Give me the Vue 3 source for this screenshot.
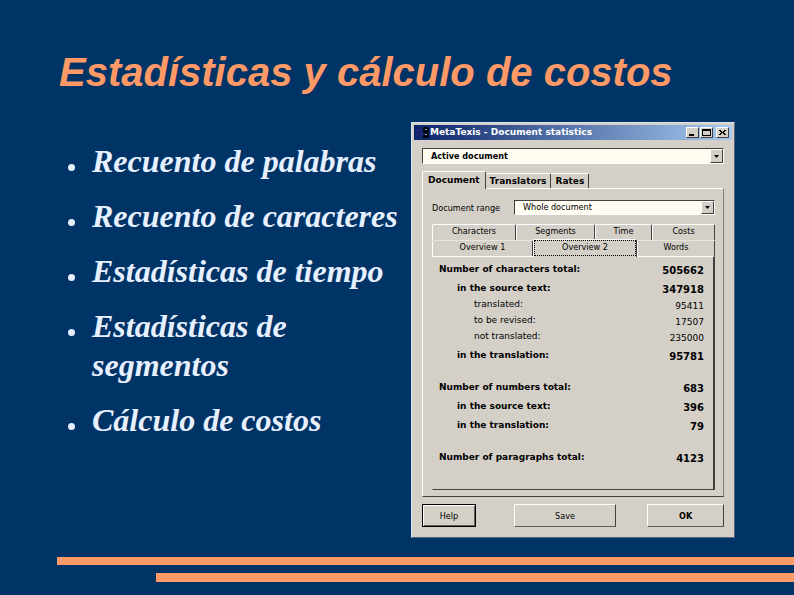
<script setup>
import { ref } from 'vue'

const topics = [
  'Recuento de palabras',
  'Recuento de caracteres',
  'Estadísticas de tiempo',
  'Estadísticas de segmentos',
  'Cálculo de costos',
]

const scope = ref('Active document')
const range = ref('Whole document')
const mainTabs = ['Document', 'Translators', 'Rates']
const backTabs = ['Characters', 'Segments', 'Time', 'Costs']
const frontTabs = ['Overview 1', 'Overview 2', 'Words']
const mainTab = ref('Document')
const subTab = ref('Overview 2')

const groups = [
  [
    { label: 'Number of characters total:', value: 505662, level: 0 },
    { label: 'in the source text:', value: 347918, level: 1 },
    { label: 'translated:', value: 95411, level: 2 },
    { label: 'to be revised:', value: 17507, level: 2 },
    { label: 'not translated:', value: 235000, level: 2 },
    { label: 'in the translation:', value: 95781, level: 1 },
  ],
  [
    { label: 'Number of numbers total:', value: 683, level: 0 },
    { label: 'in the source text:', value: 396, level: 1 },
    { label: 'in the translation:', value: 79, level: 1 },
  ],
  [{ label: 'Number of paragraphs total:', value: 4123, level: 0 }],
]
</script>

<template>
  <div class="slide">
    <h1>Estadísticas y cálculo de costos</h1>
    <main>
      <ul class="topics">
        <li v-for="t in topics" :key="t"><span>{{ t }}</span></li>
      </ul>

      <section class="dialog" aria-labelledby="dialog-title">
        <header class="titlebar">
          <svg class="logo" viewBox="0 0 15 13" aria-hidden="true">
            <path d="M1 3h2v2H1zM4 3h2v2H4zM1 7h2v2H1zM4 7h2v2H4z" fill="#2a1c78" />
            <path d="M8 1h5l1 2v3l-1 1 1 1v4H8V9h2V7H8z" fill="#05060f" />
            <path d="M10 3h2v1h-2zM10 8h2v1h-2z" fill="#8f9cc4" />
          </svg>
          <h2 id="dialog-title">MetaTexis - Document statistics</h2>
          <div class="winbuttons">
            <button type="button" aria-label="Minimize">
              <svg viewBox="0 0 11 9"><path d="M2 6h5v2H2z" /></svg>
            </button>
            <button type="button" aria-label="Maximize">
              <svg viewBox="0 0 11 9"><path d="M1 1h9v7H1zM2 3v4h7V3z" fill-rule="evenodd" /></svg>
            </button>
            <button type="button" class="close" aria-label="Close">
              <svg viewBox="0 0 11 9"><path d="M2 2h2v1h1v1h1V3h1V2h2v1H8v1H7v1h1v1h1v1H7V6H6V5H5v1H4v1H2V6h1V5h1V4H3V3H2z" /></svg>
            </button>
          </div>
        </header>

        <div class="body">
          <div class="combo scope">
            <select v-model="scope" aria-label="Scope">
              <option>Active document</option>
            </select>
            <span class="arrow"><svg viewBox="0 0 5 3"><path d="M0 0h5L2.500 3z" /></svg></span>
          </div>

          <div class="tabs main-tabs" role="tablist">
            <button
              v-for="t in mainTabs" :key="t" type="button" role="tab"
              :aria-selected="mainTab === t" :class="{ on: mainTab === t }" @click="mainTab = t"
            >{{ t }}</button>
          </div>

          <div class="panel">
            <div class="range">
              <label for="range">Document range</label>
              <div class="combo">
                <select id="range" v-model="range">
                  <option>Whole document</option>
                </select>
                <span class="arrow"><svg viewBox="0 0 5 3"><path d="M0 0h5L2.500 3z" /></svg></span>
              </div>
            </div>

            <div role="tablist">
              <div class="tabs back">
                <button
                  v-for="t in backTabs" :key="t" type="button" role="tab"
                  :aria-selected="subTab === t" :class="{ on: subTab === t }" @click="subTab = t"
                >{{ t }}</button>
              </div>
              <div class="tabs front">
                <button
                  v-for="t in frontTabs" :key="t" type="button" role="tab"
                  :aria-selected="subTab === t" :class="{ on: subTab === t }" @click="subTab = t"
                >{{ t }}</button>
              </div>
            </div>

            <div class="sheet">
              <table>
                <tbody v-for="(g, i) in groups" :key="i">
                  <tr v-for="r in g" :key="r.label" :class="'level' + r.level">
                    <th scope="row">{{ r.label }}</th>
                    <td>{{ r.value }}</td>
                  </tr>
                </tbody>
              </table>
            </div>
          </div>

          <div class="actions">
            <button type="button" class="help">Help</button>
            <button type="button" class="save">Save</button>
            <button type="button" class="ok">OK</button>
          </div>
        </div>
      </section>
    </main>
    <footer><i></i><i></i></footer>
  </div>
</template>

<style>
body {
  background: #003366;
}
</style>

<style scoped>
* {
  box-sizing: border-box;
}
.slide {
  min-height: 100vh;
  display: flex;
  flex-direction: column;
  padding: 49px 0 13px;
  background: #003366;
}
h1 {
  margin: 0 59px 27px;
  color: #ff9966;
  font: italic bold 40px/46px "Liberation Sans", sans-serif;
}
main {
  display: grid;
  grid-template-columns: minmax(0, 343fr) minmax(0, 324fr);
  align-items: start;
  padding: 0 59px 0 68px;
}
.topics {
  display: grid;
  gap: 16px;
  margin: 20px 0 0;
  padding: 0;
  list-style: none;
  color: #e6f0ff;
  font: italic bold 32px/39px "Liberation Serif", serif;
}
.topics li {
  display: grid;
  grid-template-columns: 7px 1fr;
  column-gap: 17px;
}
.topics li::before {
  content: "";
  width: 7px;
  height: 7px;
  margin-top: 22px;
  border-radius: 50%;
  background: #e6f0ff;
}

.dialog {
  padding: 2px;
  border: 1px solid;
  border-color: #d6e4f4 #56667a #56667a #d6e4f4;
  background: #d4d0c8;
  color: #000;
  font: 9px/12px "DejaVu Sans Condensed", "DejaVu Sans", sans-serif;
}
button,
select {
  margin: 0;
  padding: 0;
  border: 0;
  border-radius: 0;
  background: #d4d0c8;
  color: #000;
  font: inherit;
}
.titlebar {
  display: flex;
  align-items: center;
  height: 15px;
  padding: 0 3px 0 1px;
  background: linear-gradient(90deg, #0a246a, #a6caf0);
}
.logo {
  width: 15px;
  height: 13px;
}
.titlebar h2 {
  flex: 1;
  margin: 0;
  color: #fff;
  font-family: "DejaVu Sans", sans-serif;
  font-size: 9px;
  line-height: 13px;
  white-space: nowrap;
}
.winbuttons {
  display: flex;
  gap: 1px;
}
.winbuttons button {
  display: flex;
  width: 13px;
  height: 11px;
  border: 1px solid;
  border-color: #fff #404040 #404040 #fff;
}
.winbuttons .close {
  margin-left: 2px;
}
.winbuttons svg {
  width: 11px;
  height: 9px;
}
.body {
  padding: 8px;
}
.combo {
  position: relative;
  flex: 1;
  height: 15px;
  border: 1px solid;
  border-color: #404040 #fff #fff #404040;
  background: #fffcf2;
}
.combo select {
  display: block;
  width: 100%;
  height: 13px;
  padding-left: 8px;
  appearance: none;
  background: #fffcf2;
  line-height: 13px;
}
.scope {
  height: 16px;
}
.scope select {
  height: 14px;
  font-weight: bold;
}
.arrow {
  position: absolute;
  top: 0;
  right: 0;
  bottom: 0;
  display: grid;
  place-items: center;
  width: 13px;
  border: 1px solid;
  border-color: #fff #404040 #404040 #fff;
  background: #d4d0c8;
  pointer-events: none;
}
.arrow svg {
  width: 5px;
  height: 3px;
}
.tabs button {
  border: 1px solid;
  border-color: #fff #404040 transparent #fff;
  border-bottom: 0;
  border-radius: 2px 2px 0 0;
  text-align: center;
  white-space: nowrap;
}
.main-tabs {
  display: flex;
  align-items: flex-end;
  margin-top: 7px;
  font-family: "DejaVu Sans", sans-serif;
  font-weight: bold;
}
.main-tabs button {
  height: 15px;
  padding: 0 4px;
  border-left: 0;
}
.main-tabs .on {
  position: relative;
  height: 18px;
  margin-bottom: -1px;
  padding: 0 5px 2px;
  border-left: 1px solid #fff;
}
.panel {
  padding: 11px 8px 6px 9px;
  border: 1px solid;
  border-color: #fff #808080 #404040 #fff;
}
.range {
  display: flex;
  align-items: center;
  margin-bottom: 9px;
}
.range label {
  width: 29%;
}
.back {
  display: grid;
  grid-template-columns: 84fr 79fr 57fr 63fr;
}
.front {
  display: grid;
  grid-template-columns: 101fr 104fr 78fr;
}
.back button,
.front button {
  height: 16px;
  padding-bottom: 3px;
}
.front button:not(.on) {
  border-top-color: #e8e5de;
}
.front .on {
  position: relative;
  margin: -1px 0;
  height: 18px;
  padding-bottom: 4px;
  outline: 1px dotted #000;
  outline-offset: -2px;
}
.sheet {
  padding: 2px 9px 23px 6px;
  border: 1px solid;
  border-color: #fff #404040 #404040 #d4d0c8;
  border-right-width: 2px;
}
table {
  width: 100%;
  border-collapse: collapse;
  font-family: "DejaVu Sans", sans-serif;
}
th,
td {
  height: 19px;
  padding: 0;
  text-align: left;
  font-weight: bold;
}
td {
  padding-top: 4px;
  font-size: 10px;
  text-align: right;
}
tbody + tbody::before {
  content: "";
  display: block;
  height: 13px;
}
.level1 th {
  padding-left: 18px;
}
.level2 th,
.level2 td {
  height: 16px;
  font-size: 9px;
  font-weight: normal;
}
.level2 th {
  padding: 0 0 3px 35px;
}
.level2 td {
  padding-top: 1px;
}
.actions {
  display: grid;
  grid-template-columns: 54fr 38fr 103fr 31fr 77fr;
  margin-top: 7px;
}
.actions button {
  height: 23px;
  border: 1px solid;
  border-color: #fff #404040 #606060 #fff;
}
.actions .help {
  border-color: #000;
  box-shadow: inset 1px 1px #fff, inset -1px -1px #606060;
}
.actions .save {
  grid-column: 3;
}
.actions .ok {
  grid-column: 5;
  font-weight: bold;
}

footer {
  display: grid;
  gap: 8px;
  margin-top: auto;
  padding-top: 17px;
}
footer i {
  height: 8px;
  margin-left: 57px;
  background: #ff9966;
}
footer i + i {
  height: 9px;
  margin-left: 156px;
}
</style>
